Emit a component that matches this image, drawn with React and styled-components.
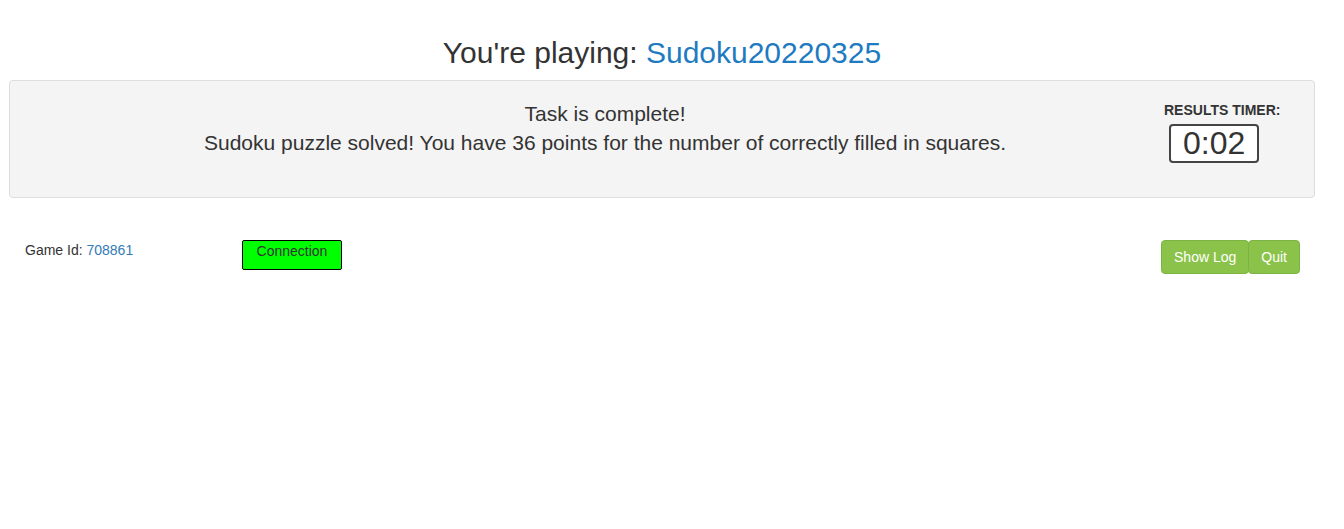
import React from "react";
import styled, { createGlobalStyle } from "styled-components";

const GlobalStyle = createGlobalStyle`
  body {
    margin: 0;
    background: #ffffff;
    color: #333333;
    font-family: "Liberation Sans", Arial, Helvetica, sans-serif;
    font-size: 14px;
  }
`;

export default function App() {
  return (
    <>
      <GlobalStyle />
      <Page>
        <Title>
          You're playing: <GameName>Sudoku20220325</GameName>
        </Title>
        <Panel>
          <Message>
            <div>Task is complete!</div>
            <div>
              Sudoku puzzle solved! You have 36 points for the number of correctly
              filled in squares.
            </div>
          </Message>
          <TimerColumn>
            <TimerLabel>Results Timer:</TimerLabel>
            <TimerBox>0:02</TimerBox>
          </TimerColumn>
        </Panel>
        <Footer>
          <GameId>
            Game Id: <IdValue>708861</IdValue>
          </GameId>
          <ConnectionBadge>Connection</ConnectionBadge>
          <Actions>
            <ActionButton>Show Log</ActionButton>
            <ActionButton>Quit</ActionButton>
          </Actions>
        </Footer>
      </Page>
    </>
  );
}

const Page = styled.div`
  width: 100%;
`;

const Title = styled.h2`
  margin: 0 0 11px;
  padding: 36px 20px 0 0;
  font-size: 30px;
  font-weight: 400;
  line-height: 33px;
  text-align: center;
  color: #333333;
`;

const GameName = styled.span`
  color: #1f7bc1;
`;

const Panel = styled.div`
  display: flex;
  height: 116px;
  margin: 0 29px 0 9px;
  background: #f4f4f4;
  border: 1px solid #dddddd;
  border-radius: 4px;
`;

const Message = styled.div`
  flex: 1;
  padding: 18px 0 0 36px;
  font-size: 21px;
  line-height: 29px;
  text-align: center;
  color: #333333;
`;

const TimerColumn = styled.div`
  width: 150px;
  padding-top: 21px;
`;

const TimerLabel = styled.div`
  font-size: 14px;
  font-weight: 700;
  line-height: 16px;
  text-transform: uppercase;
  color: #333333;
`;

const TimerBox = styled.div`
  display: inline-block;
  margin: 6px 0 0 5px;
  padding: 0 12px;
  font-size: 32px;
  line-height: 35px;
  background: #ffffff;
  border: 2px solid #444444;
  border-radius: 4px;
  color: #333333;
`;

const Footer = styled.div`
  display: flex;
  align-items: flex-start;
  margin-top: 42px;
  padding: 0 44px 0 25px;
`;

const GameId = styled.div`
  width: 217px;
  line-height: 20px;
  font-size: 14px;
`;

const IdValue = styled.span`
  color: #337ab7;
`;

const ConnectionBadge = styled.div`
  box-sizing: border-box;
  width: 100px;
  height: 30px;
  padding-top: 1px;
  font-size: 14px;
  line-height: 18px;
  text-align: center;
  background: #00ff00;
  border: 1px solid #000000;
  border-radius: 2px;
  color: #333333;
`;

const Actions = styled.div`
  display: flex;
  margin-left: auto;
`;

const ActionButton = styled.button`
  padding: 6px 12px;
  font-family: inherit;
  font-size: 14px;
  line-height: 20px;
  color: #ffffff;
  background: #8bc34a;
  border: 1px solid #7cb342;
  border-radius: 4px;
  cursor: pointer;

  & + & {
    margin-left: -1px;
  }
`;
